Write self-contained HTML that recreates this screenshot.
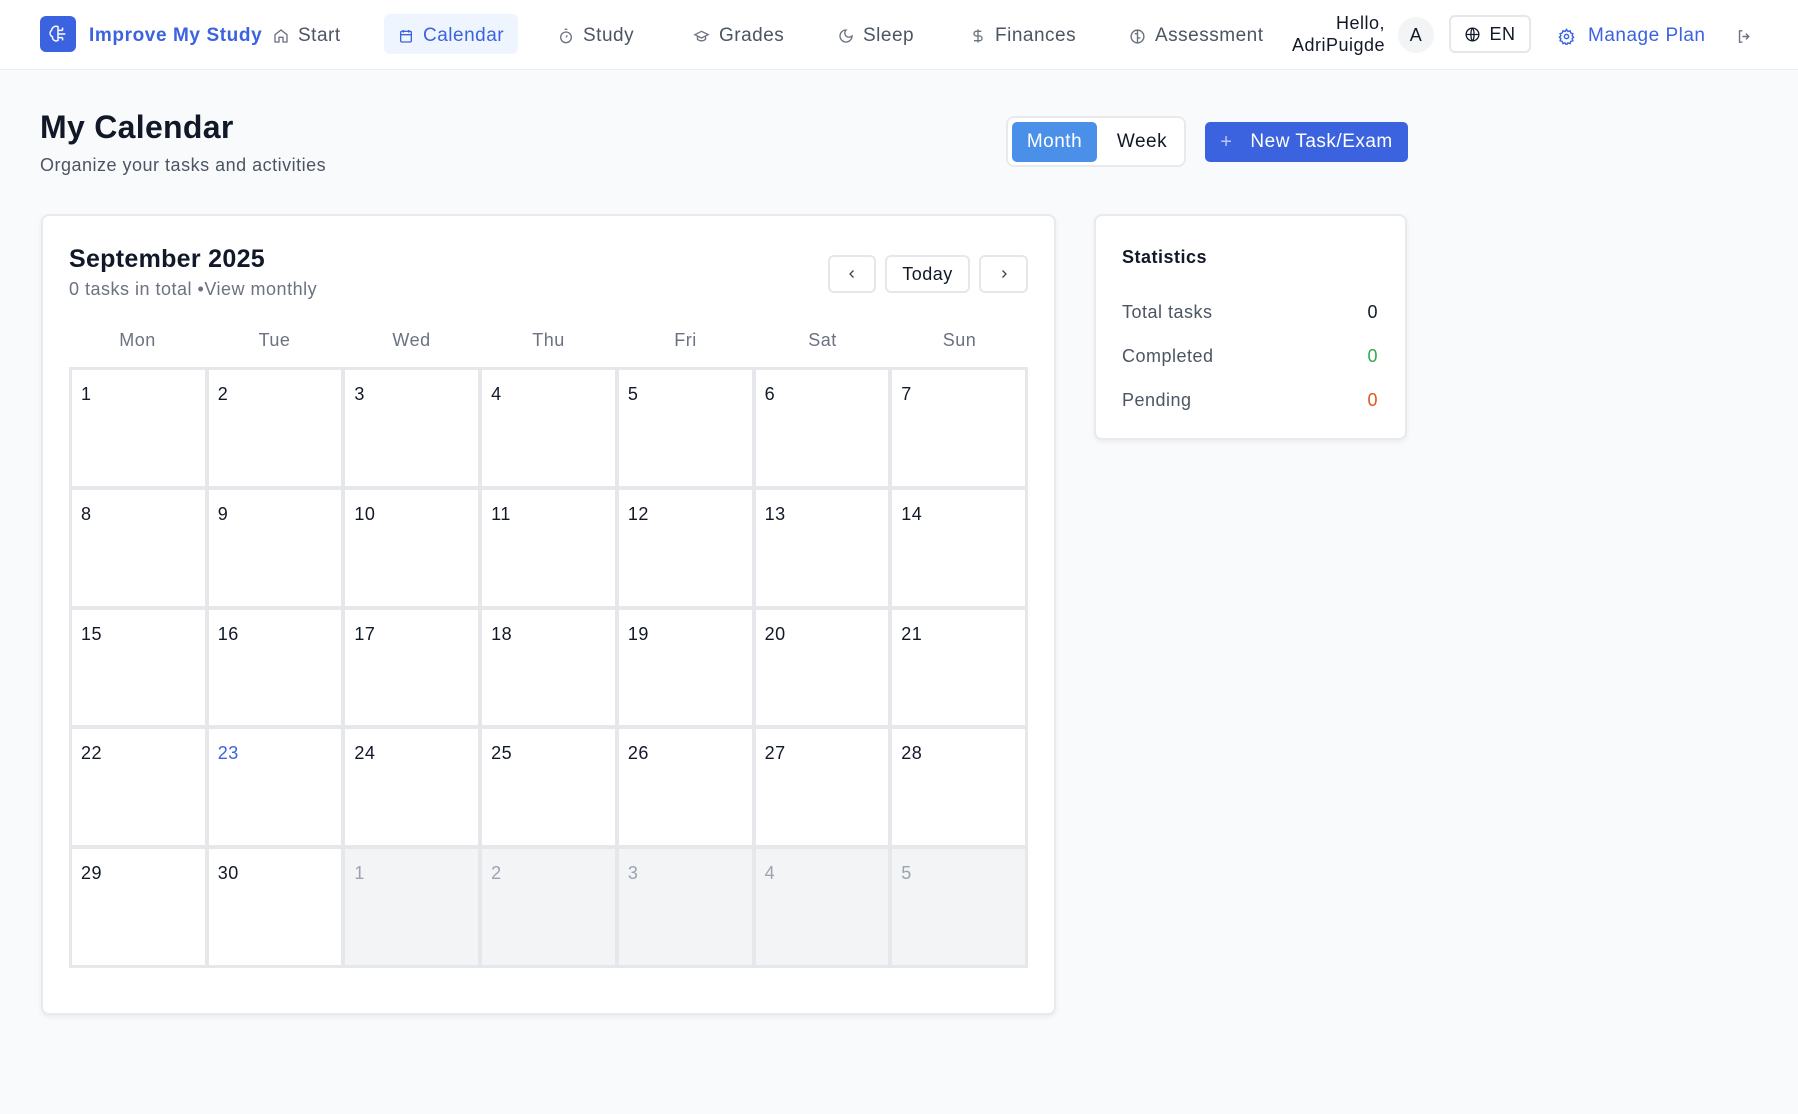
<!DOCTYPE html>
<html><head><meta charset="utf-8"><style>
*{box-sizing:border-box;margin:0;padding:0}
body{width:1798px;height:1114px;background:#f9fafb;font-family:"Liberation Sans",sans-serif;color:#111827;position:relative;overflow:hidden;letter-spacing:0.5px}
.nav{position:absolute;left:0;top:0;width:1798px;height:70px;background:#fff;border-bottom:1px solid #eceef1}
.a{position:absolute}
.ni{position:absolute;top:1px;height:70px;display:flex;align-items:center;font-size:19px;color:#4b5563}
.ni svg{margin-right:9px}
.card{position:absolute;background:#fff;border:2px solid #e9eaec;border-radius:8px;box-shadow:0 2px 4px rgba(0,0,0,.06)}
.grid{position:absolute;left:69px;top:367px;width:959px;height:601px;background:#e5e7eb;padding:3px;display:grid;grid-template-columns:repeat(7,1fr);grid-template-rows:repeat(5,1fr);gap:4px}
.grid div{background:#fff;padding:14px 0 0 9px;font-size:18px;color:#111827}
.grid div.o{background:#f3f4f6;color:#9ca3af}
.dh{position:absolute;top:330px;font-size:18px;color:#6b7280;width:137px;text-align:center}
.btn{position:absolute;border:2px solid #e5e7eb;border-radius:6px;background:#fff;display:flex;align-items:center;justify-content:center;font-size:18px}
.sr{position:absolute;left:1122px;width:256px;display:flex;justify-content:space-between;font-size:18px;color:#4b5563}
</style></head><body>
<div class="nav">
 <div class="a" style="left:40px;top:16px;width:36px;height:36px;background:#3b63e0;border-radius:6px;display:flex;align-items:center;justify-content:center">
  <svg width="22" height="22" viewBox="0 0 24 24" fill="none" stroke="#fff" stroke-width="1.6"><path d="M12 4a5 5 0 0 0-7 4 4 4 0 0 0 1 7 4 4 0 0 0 6 4V4zM12 8h5M12 12h6M12 16h5M17 8v-3M18 12h2M17 16v3"/></svg></div>
 <div class="a" style="left:89px;top:1px;height:70px;display:flex;align-items:center;font-size:19px;font-weight:bold;color:#3b63e0;letter-spacing:0.6px">Improve My Study</div>
 <div class="ni" style="left:273px"><svg width="16" height="16" viewBox="0 0 24 24" fill="none" stroke="#6b7280" stroke-width="2"><path d="M3 10l9-7 9 7v11h-6v-7h-6v7H3z"/></svg>Start</div>
 <div class="a" style="left:384px;top:14px;width:134px;height:40px;background:#eff5ff;border-radius:6px"></div>
 <div class="ni" style="left:398px;color:#3b63e0"><svg width="16" height="16" viewBox="0 0 24 24" fill="none" stroke="#3b63e0" stroke-width="2"><rect x="4" y="5" width="16" height="16" rx="2"/><path d="M4 10h16M8 3v4M16 3v4"/></svg>Calendar</div>
 <div class="ni" style="left:558px"><svg width="16" height="16" viewBox="0 0 24 24" fill="none" stroke="#6b7280" stroke-width="2"><circle cx="12" cy="14" r="8"/><path d="M10 2h4M12 14l2-3"/></svg>Study</div>
 <div class="ni" style="left:693px"><svg width="17" height="16" viewBox="0 0 24 24" fill="none" stroke="#6b7280" stroke-width="2"><path d="M2 10l10-5 10 5-10 5zM6 12v5c3 3 9 3 12 0v-5"/></svg>Grades</div>
 <div class="ni" style="left:838px"><svg width="16" height="16" viewBox="0 0 24 24" fill="none" stroke="#6b7280" stroke-width="2"><path d="M12 3a6 6 0 0 0 9 9 9 9 0 1 1-9-9z"/></svg>Sleep</div>
 <div class="ni" style="left:970px"><svg width="16" height="16" viewBox="0 0 24 24" fill="none" stroke="#6b7280" stroke-width="2"><path d="M12 2v20M17 5H9.5a3.5 3.5 0 0 0 0 7h5a3.5 3.5 0 0 1 0 7H6"/></svg>Finances</div>
 <div class="ni" style="left:1129px"><svg width="17" height="17" viewBox="0 0 24 24" fill="none" stroke="#6b7280" stroke-width="2"><circle cx="12" cy="12" r="9"/><path d="M12 3v18M8 8h4M12 14h4"/></svg>Assessment</div>
 <div class="a" style="left:1260px;top:12px;width:125px;text-align:right;font-size:18px;line-height:22px;color:#111827">Hello,<br>AdriPuigde</div>
 <div class="a" style="left:1398px;top:17px;width:36px;height:36px;border-radius:50%;background:#f3f4f6;display:flex;align-items:center;justify-content:center;font-size:18px">A</div>
 <div class="btn" style="left:1449px;top:15px;width:82px;height:38px"><svg width="17" height="17" viewBox="0 0 24 24" fill="none" stroke="#111827" stroke-width="1.8" style="margin-right:8px"><circle cx="12" cy="12" r="9"/><path d="M3 12h18M12 3c3 3 3 15 0 18M12 3c-3 3-3 15 0 18"/></svg>EN</div>
 <div class="ni" style="left:1558px;color:#3b63e0"><svg width="17" height="17" viewBox="0 0 24 24" fill="none" stroke="#3b63e0" stroke-width="2" style="margin-right:13px"><circle cx="12" cy="12" r="3"/><path d="M12 2l2 3 3-1 1 3 3 1-1 3 2 2-2 2 1 3-3 1-1 3-3-1-2 3-2-3-3 1-1-3-3-1 1-3-2-2 2-2-1-3 3-1 1-3 3 1z"/></svg>Manage Plan</div>
 <div class="ni" style="left:1736px"><svg width="17" height="17" viewBox="0 0 24 24" fill="none" stroke="#6b7280" stroke-width="2"><path d="M9 4H5v16h4M14 8l4 4-4 4M18 12H9"/></svg></div>
</div>
<div class="a" style="left:40px;top:109px;font-size:32px;font-weight:bold;letter-spacing:0.3px">My Calendar</div>
<div class="a" style="left:40px;top:155px;font-size:18px;color:#4b5563">Organize your tasks and activities</div>
<div class="a" style="left:1006px;top:116px;width:180px;height:51px;background:#fff;border:2px solid #e9eaec;border-radius:8px"></div>
<div class="a" style="left:1012px;top:122px;width:85px;height:40px;background:#4a90e8;border-radius:5px;color:#fff;font-size:19px;display:flex;align-items:center;justify-content:center">Month</div>
<div class="a" style="left:1100px;top:122px;width:84px;height:40px;color:#111827;font-size:19px;display:flex;align-items:center;justify-content:center">Week</div>
<div class="a" style="left:1205px;top:122px;width:203px;height:40px;background:#3b63e0;border-radius:5px;color:#fff;font-size:19px;display:flex;align-items:center;justify-content:center"><span style="margin-right:18px;font-size:20px;color:#b8c8f8">+</span>New Task/Exam</div>

<div class="card" style="left:41px;top:214px;width:1015px;height:801px"></div>
<div class="a" style="left:69px;top:245px;font-size:25px;font-weight:bold;letter-spacing:0.3px">September 2025</div>
<div class="a" style="left:69px;top:279px;font-size:18px;color:#6b7280">0 tasks in total •View monthly</div>
<div class="btn" style="left:828px;top:255px;width:48px;height:38px"><svg width="12" height="12" viewBox="0 0 24 24" fill="none" stroke="#374151" stroke-width="2.5"><path d="M15 5l-7 7 7 7"/></svg></div>
<div class="btn" style="left:885px;top:255px;width:85px;height:38px">Today</div>
<div class="btn" style="left:979px;top:255px;width:49px;height:38px"><svg width="12" height="12" viewBox="0 0 24 24" fill="none" stroke="#374151" stroke-width="2.5"><path d="M9 5l7 7-7 7"/></svg></div>
<div class="dh" style="left:69px">Mon</div><div class="dh" style="left:206px">Tue</div><div class="dh" style="left:343px">Wed</div><div class="dh" style="left:480px">Thu</div><div class="dh" style="left:617px">Fri</div><div class="dh" style="left:754px">Sat</div><div class="dh" style="left:891px">Sun</div>
<div class="grid">
<div>1</div><div>2</div><div>3</div><div>4</div><div>5</div><div>6</div><div>7</div>
<div>8</div><div>9</div><div>10</div><div>11</div><div>12</div><div>13</div><div>14</div>
<div>15</div><div>16</div><div>17</div><div>18</div><div>19</div><div>20</div><div>21</div>
<div>22</div><div style="color:#3b63e0">23</div><div>24</div><div>25</div><div>26</div><div>27</div><div>28</div>
<div>29</div><div>30</div><div class="o">1</div><div class="o">2</div><div class="o">3</div><div class="o">4</div><div class="o">5</div>
</div>

<div class="card" style="left:1094px;top:214px;width:313px;height:226px"></div>
<div class="a" style="left:1122px;top:247px;font-size:18px;font-weight:bold">Statistics</div>
<div class="sr" style="top:302px"><span>Total tasks</span><span style="color:#111827">0</span></div>
<div class="sr" style="top:346px"><span>Completed</span><span style="color:#3aa84a">0</span></div>
<div class="sr" style="top:390px"><span>Pending</span><span style="color:#e0561e">0</span></div>
</body></html>
